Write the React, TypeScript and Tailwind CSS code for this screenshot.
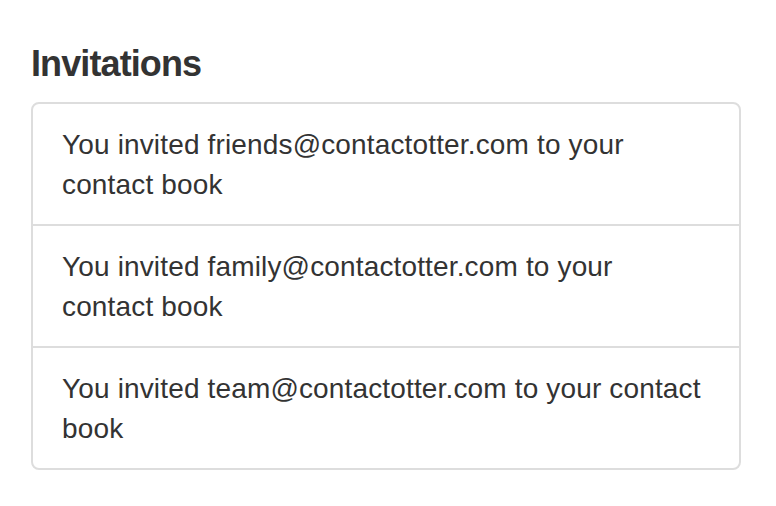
const invitations = [
  'friends@contactotter.com',
  'family@contactotter.com',
  'team@contactotter.com',
];

export default function App() {
  return (
    <div
      className="min-h-screen bg-white pl-[31px] pt-[44px] text-[#333]"
      style={{ fontFamily: '"Liberation Sans", Arial, sans-serif' }}
    >
      <h3 className="mb-[18px] text-[36px] font-bold leading-[40px] tracking-[-0.9px]">Invitations</h3>
      <ul className="w-[710px] divide-y-[2px] divide-[#ddd] rounded-[8px] border-[2px] border-[#ddd]">
        {invitations.map((email) => (
          <li key={email} className="px-[29px] pb-[19px] pt-[21px] text-[28px] leading-[40px] tracking-[0.15px]">
            {`You invited ${email} to your contact book`}
          </li>
        ))}
      </ul>
    </div>
  );
}
